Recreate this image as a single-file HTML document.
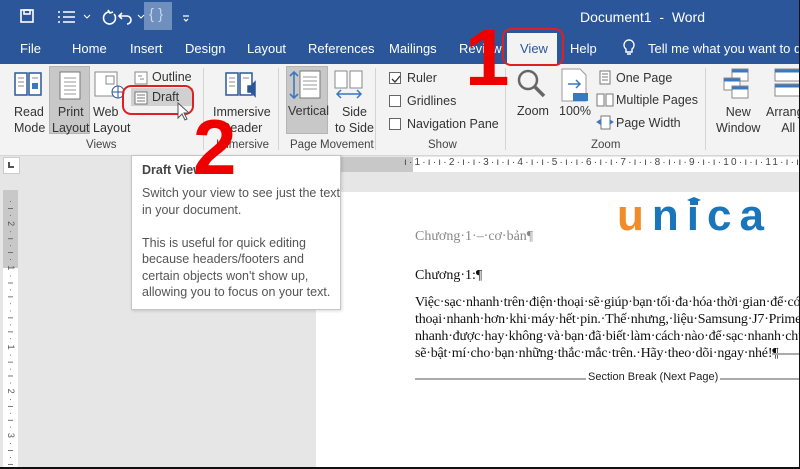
<!DOCTYPE html><html><head><meta charset="utf-8"><style>
*{margin:0;padding:0;box-sizing:border-box}
body{width:800px;height:469px;overflow:hidden;position:relative;background:#e6e6e6;font-family:"Liberation Sans",sans-serif;color:#333}
.a{position:absolute;white-space:nowrap}
.t{font-size:13px;color:#fff}
.r{font-size:12.5px;color:#333}
.g{font-size:11.5px;color:#444}
.sep{position:absolute;top:68px;width:1px;height:82px;background:#d4d4d4}
.doc{font-family:"Liberation Serif",serif;font-size:14px;color:#111}
.cb{position:absolute;width:12px;height:12px;border:1px solid #666;background:#fff}
</style></head><body>
<div class="a" style="left:0;top:0;width:800px;height:64px;background:#2b579a"></div>
<div class="a" style="left:144px;top:2px;width:28px;height:28px;background:#6f8fbf"></div>
<div class="a t" style="left:149px;top:6px;font-size:15px;color:#c8d4ea">{ }</div>
<svg class="a" style="left:18px;top:8px" width="180" height="18" viewBox="0 0 180 18" fill="none" stroke="#fff" stroke-width="1.6"><rect x="3" y="2" width="12" height="12"/><rect x="6" y="2" width="6" height="4"/><path d="M45 4h12M45 9h12M45 14h12M40 4h2M40 9h2M40 14h2"/><path d="M66 7l3 3 3-3" stroke-width="1"/><path d="M92 4a6 6 0 1 0 4 2M90 2l2 3 3-1"/><path d="M104 5l-3 3 3 3M101 8h8a4 4 0 0 1 0 8"/><path d="M120 7l3 3 3-3" stroke-width="1"/><path d="M165 8h6M166 11l2 2 2-2" stroke-width="1.2"/></svg>
<div class="a t" style="left:580px;top:9px;font-size:14px">Document1 &nbsp;-&nbsp; Word</div>
<div class="a t" style="left:20px;top:41px">File</div>
<div class="a t" style="left:72px;top:41px">Home</div>
<div class="a t" style="left:130px;top:41px">Insert</div>
<div class="a t" style="left:185px;top:41px">Design</div>
<div class="a t" style="left:247px;top:41px">Layout</div>
<div class="a t" style="left:308px;top:41px">References</div>
<div class="a t" style="left:389px;top:41px">Mailings</div>
<div class="a t" style="left:459px;top:41px">Review</div>
<div class="a" style="left:507px;top:33px;width:50px;height:31px;background:#f3f3f3"></div>
<div class="a t" style="left:520px;top:41px;color:#2b579a">View</div>
<div class="a t" style="left:570px;top:41px">Help</div>
<svg class="a" style="left:622px;top:39px" width="14" height="18" fill="none" stroke="#fff" stroke-width="1.4"><path d="M7 1a5 5 0 0 0-3 9v3h6v-3a5 5 0 0 0-3-9zM5 15h4"/></svg>
<div class="a t" style="left:648px;top:41px">Tell me what you want to do</div>
<div class="a" style="left:0;top:64px;width:800px;height:92px;background:#f3f3f3;border-bottom:1px solid #d6d6d6"></div>
<svg class="a" style="left:13px;top:70px" width="30" height="28" fill="#fff" stroke="#2b579a" stroke-width="1.5"><path d="M2 3h12v22H2zM16 3h12v22H16z"/><path d="M5 8h6M5 12h6M5 16h6M19 8h6" stroke="#888" stroke-width="1"/><rect x="19" y="13" width="6" height="6" fill="#3a78c0" stroke="none"/></svg>
<div class="a r" style="left:14px;top:104px;line-height:16px">Read<br>Mode</div>
<div class="a" style="left:49px;top:66px;width:41px;height:68px;background:#c8c8c8;border:1px solid #b5b5b5"></div>
<svg class="a" style="left:58px;top:71px" width="24" height="30" fill="#fff" stroke="#777"><rect x="2" y="1" width="20" height="27"/><path d="M6 7h12M6 11h12M6 15h12M6 19h12M6 23h12" stroke="#999"/></svg>
<div class="a r" style="left:52px;top:104px;line-height:16px;text-align:center">Print<br>Layout</div>
<svg class="a" style="left:94px;top:71px" width="32" height="30" fill="#fff" stroke="#888"><rect x="1" y="1" width="22" height="24"/><rect x="12" y="5" width="8" height="8"/><circle cx="24" cy="21" r="6" stroke="#2b579a"/><path d="M18 21h12M24 15v12" stroke="#2b579a"/></svg>
<div class="a r" style="left:93px;top:104px;line-height:16px">Web<br>Layout</div>
<svg class="a" style="left:134px;top:71px" width="14" height="14" fill="#fff" stroke="#888"><rect x="1" y="1" width="12" height="12"/><path d="M4 5h4M6 8h4" /></svg>
<div class="a r" style="left:152px;top:70px">Outline</div>
<div class="a" style="left:131px;top:88px;width:62px;height:18px;background:#d0d0d0"></div>
<svg class="a" style="left:134px;top:91px" width="14" height="14" fill="#fff" stroke="#777"><rect x="1" y="1" width="12" height="12"/><path d="M3 4h8M3 7h8M3 10h8"/></svg>
<div class="a r" style="left:152px;top:90px">Draft</div>
<div class="a" style="left:122px;top:85px;width:72px;height:30px;border:2px solid #e02020;border-radius:9px"></div>
<svg class="a" style="left:177px;top:102px" width="14" height="20"><path d="M1 1v15l4-4 3 6 2-1-3-6h5z" fill="#fff" stroke="#555"/></svg>
<div class="a g" style="left:86px;top:139px">Views</div>
<div class="sep" style="left:203px"></div>
<svg class="a" style="left:224px;top:70px" width="34" height="30" fill="#fff" stroke="#2b579a" stroke-width="1.5"><path d="M2 3h12v22H2zM16 3h12v22H16z"/><path d="M5 8h6M5 12h6M5 16h6M19 8h6" stroke="#888" stroke-width="1"/><path d="M24 16h3l4-4v14l-4-4h-3z" fill="#2b579a"/></svg>
<div class="a r" style="left:213px;top:104px;line-height:16px;text-align:center">Immersive<br>Reader</div>
<div class="a g" style="left:216px;top:139px">Immersive</div>
<div class="sep" style="left:278px"></div>
<div class="a" style="left:286px;top:66px;width:42px;height:68px;background:#c8c8c8;border:1px solid #b5b5b5"></div>
<svg class="a" style="left:288px;top:70px" width="38" height="30" fill="#fff" stroke="#777"><rect x="12" y="1" width="20" height="27"/><path d="M15 7h14M15 11h14M15 15h14M15 19h14" stroke="#999"/><path d="M6 2v26M2 6l4-4 4 4M2 24l4 4 4-4" stroke="#3a78c0" stroke-width="1.6" fill="none"/></svg>
<div class="a r" style="left:288px;top:104px">Vertical</div>
<svg class="a" style="left:333px;top:70px" width="32" height="30" fill="#fff" stroke="#888"><rect x="2" y="1" width="12" height="17"/><rect x="17" y="1" width="12" height="17"/><path d="M4 24h24M8 20l-4 4 4 4M24 20l4 4-4 4" stroke="#3a78c0" stroke-width="1.5" fill="none"/></svg>
<div class="a r" style="left:335px;top:104px;line-height:16px;text-align:center">Side<br>to Side</div>
<div class="a g" style="left:290px;top:139px">Page Movement</div>
<div class="sep" style="left:375px"></div>
<div class="cb" style="left:389px;top:72px"></div>
<svg class="a" style="left:390px;top:73px" width="11" height="11"><path d="M2 6l3 3 5-6" stroke="#333" fill="none" stroke-width="1.3"/></svg>
<div class="a r" style="left:407px;top:71px">Ruler</div>
<div class="cb" style="left:389px;top:95px"></div>
<div class="a r" style="left:407px;top:94px">Gridlines</div>
<div class="cb" style="left:389px;top:118px"></div>
<div class="a r" style="left:407px;top:117px">Navigation Pane</div>
<div class="a g" style="left:428px;top:139px">Show</div>
<div class="sep" style="left:505px"></div>
<svg class="a" style="left:516px;top:68px" width="32" height="32" fill="none" stroke="#666" stroke-width="2.5"><circle cx="12" cy="12" r="9"/><path d="M19 19l9 9" stroke-width="3.5"/></svg>
<div class="a r" style="left:517px;top:104px">Zoom</div>
<svg class="a" style="left:560px;top:68px" width="30" height="34" fill="#fff" stroke="#999"><path d="M2 1h18l6 6v26H2z"/><path d="M8 16h12M16 12l4 4-4 4" stroke="#3a78c0" stroke-width="1.5"/><rect x="13" y="25" width="15" height="8" fill="#3a78c0" stroke="none"/></svg>
<div class="a r" style="left:559px;top:104px">100%</div>
<svg class="a" style="left:598px;top:70px" width="14" height="15" fill="#fff" stroke="#777"><rect x="2" y="1" width="10" height="13"/><path d="M4 4h6M4 7h6M4 10h6"/></svg>
<div class="a r" style="left:616px;top:71px">One Page</div>
<svg class="a" style="left:596px;top:93px" width="18" height="15" fill="#fff" stroke="#777"><rect x="1" y="1" width="7" height="12"/><rect x="10" y="1" width="7" height="12"/></svg>
<div class="a r" style="left:616px;top:93px">Multiple Pages</div>
<svg class="a" style="left:596px;top:115px" width="18" height="15" fill="#fff" stroke="#777"><rect x="5" y="1" width="9" height="13"/><path d="M1 7l3-2v4zM17 7l-3-2v4z" fill="#3a78c0" stroke="#3a78c0"/></svg>
<div class="a r" style="left:616px;top:116px">Page Width</div>
<div class="a g" style="left:591px;top:139px">Zoom</div>
<div class="sep" style="left:705px"></div>
<svg class="a" style="left:722px;top:68px" width="30" height="32" fill="#fff" stroke="#888"><rect x="10" y="1" width="16" height="12"/><rect x="2" y="10" width="16" height="12"/><rect x="10" y="18" width="16" height="12"/><path d="M10 3h16M2 12h16M10 20h16" stroke="#3a78c0" stroke-width="3"/></svg>
<div class="a r" style="left:716px;top:104px;line-height:16px;text-align:center">New<br>Window</div>
<svg class="a" style="left:774px;top:68px" width="26" height="32" fill="#fff" stroke="#888"><rect x="1" y="1" width="26" height="12"/><rect x="1" y="16" width="26" height="12"/><path d="M1 3h26M1 18h26" stroke="#3a78c0" stroke-width="3"/></svg>
<div class="a r" style="left:766px;top:104px;line-height:16px;text-align:center">Arrange<br>All</div>
<div class="a" style="left:465px;top:18px;font-size:80px;font-weight:bold;color:#ee0000;line-height:80px">1</div>
<div class="a" style="left:502px;top:28px;width:62px;height:38px;border:2px solid #e02020;border-radius:9px"></div>
<div class="a" style="left:3px;top:157px;width:17px;height:17px;background:#fff;border:1px solid #ccc"></div>
<div class="a" style="left:8px;top:162px;width:6px;height:6px;border-left:2px solid #555;border-bottom:2px solid #555"></div>
<div class="a" style="left:316px;top:157px;width:484px;height:15px;background:#fff;overflow:hidden"></div>
<div class="a" style="left:316px;top:157px;width:97px;height:15px;background:#c8c8c8"></div>
<div class="a" style="left:404px;top:157px;width:395px;overflow:hidden;font-size:10px;color:#444;letter-spacing:2.2px">ı·1·ı·ı·2·ı·ı·3·ı·ı·4·ı·ı·5·ı·ı·6·ı·ı·7·ı·ı·8·ı·ı·9·ı·ı·10·ı·ı·11·ı·ı·12·ı·ı·13·ı</div>
<div class="a" style="left:3px;top:190px;width:15px;height:279px;background:#fff;overflow:hidden">
<div style="position:absolute;left:0;top:0;width:15px;height:78px;background:#c8c8c8"></div>
<div style="position:absolute;left:3px;top:10px;font-size:9px;color:#555;letter-spacing:4.2px;writing-mode:vertical-rl;white-space:nowrap">·ı·2·ı·ı·1·ı·ı··ı·ı·1·ı·ı·2·ı·ı·3·ı·ı·4·ı·ı·5·ı·ı·6·ı·ı·</div>
</div>
<div class="a" style="left:316px;top:192px;width:484px;height:277px;background:#fff"></div>
<div class="a doc" style="left:415px;top:229px;color:#888">Chương·1·–·cơ·bản¶</div>
<div class="a doc" style="left:415px;top:268px">Chương·1:¶</div>
<div class="a doc" style="left:415px;top:294px;line-height:17px;letter-spacing:-0.2px">Việc·sạc·nhanh·trên·điện·thoại·sẽ·giúp·bạn·tối·đa·hóa·thời·gian·để·có·th<br>thoại·nhanh·hơn·khi·máy·hết·pin.·Thế·nhưng,·liệu·Samsung·J7·Prime·c<br>nhanh·được·hay·không·và·bạn·đã·biết·làm·cách·nào·để·sạc·nhanh·chưa<br>sẽ·bật·mí·cho·bạn·những·thắc·mắc·trên.·Hãy·theo·dõi·ngay·nhé!¶</div>
<div class="a" style="left:772px;top:353px;width:28px;height:2px;background:#aaa"></div>
<div class="a" style="left:415px;top:378px;width:385px;height:2px;background:#aaa"></div>
<div class="a" style="left:586px;top:371px;padding:0 2px;background:#fff;font-size:11px;color:#222">Section Break (Next Page)</div>
<div class="a" style="left:617px;top:193px;font-size:44px;font-weight:bold;letter-spacing:8px;line-height:46px"><span style="color:#f28c28">u</span><span style="color:#1a75bb">nıca</span></div>
<svg class="a" style="left:687px;top:196px" width="14" height="11"><path d="M0 4l7-3 7 3-7 3z" fill="#1a75bb"/><path d="M3 5v4h8V5" fill="#1a75bb"/></svg>
<div class="a" style="left:131px;top:155px;width:210px;height:155px;background:#fff;border:1px solid #c6c6c6;box-shadow:1px 1px 3px rgba(0,0,0,.15)"></div>
<div class="a" style="left:142px;top:163px;font-size:12.5px;font-weight:bold;color:#444">Draft View</div>
<div class="a" style="left:142px;top:185px;font-size:12.5px;color:#555;line-height:16.5px">Switch your view to see just the text<br>in your document.<br><br>This is useful for quick editing<br>because headers/footers and<br>certain objects won't show up,<br>allowing you to focus on your text.</div>
<div class="a" style="left:193px;top:108px;font-size:78px;font-weight:bold;color:#ee0000;line-height:78px">2</div>
<div class="a" style="left:0;top:0;width:800px;height:469px;border-right:1px solid #111;border-bottom:2px solid #111"></div>
</body></html>
